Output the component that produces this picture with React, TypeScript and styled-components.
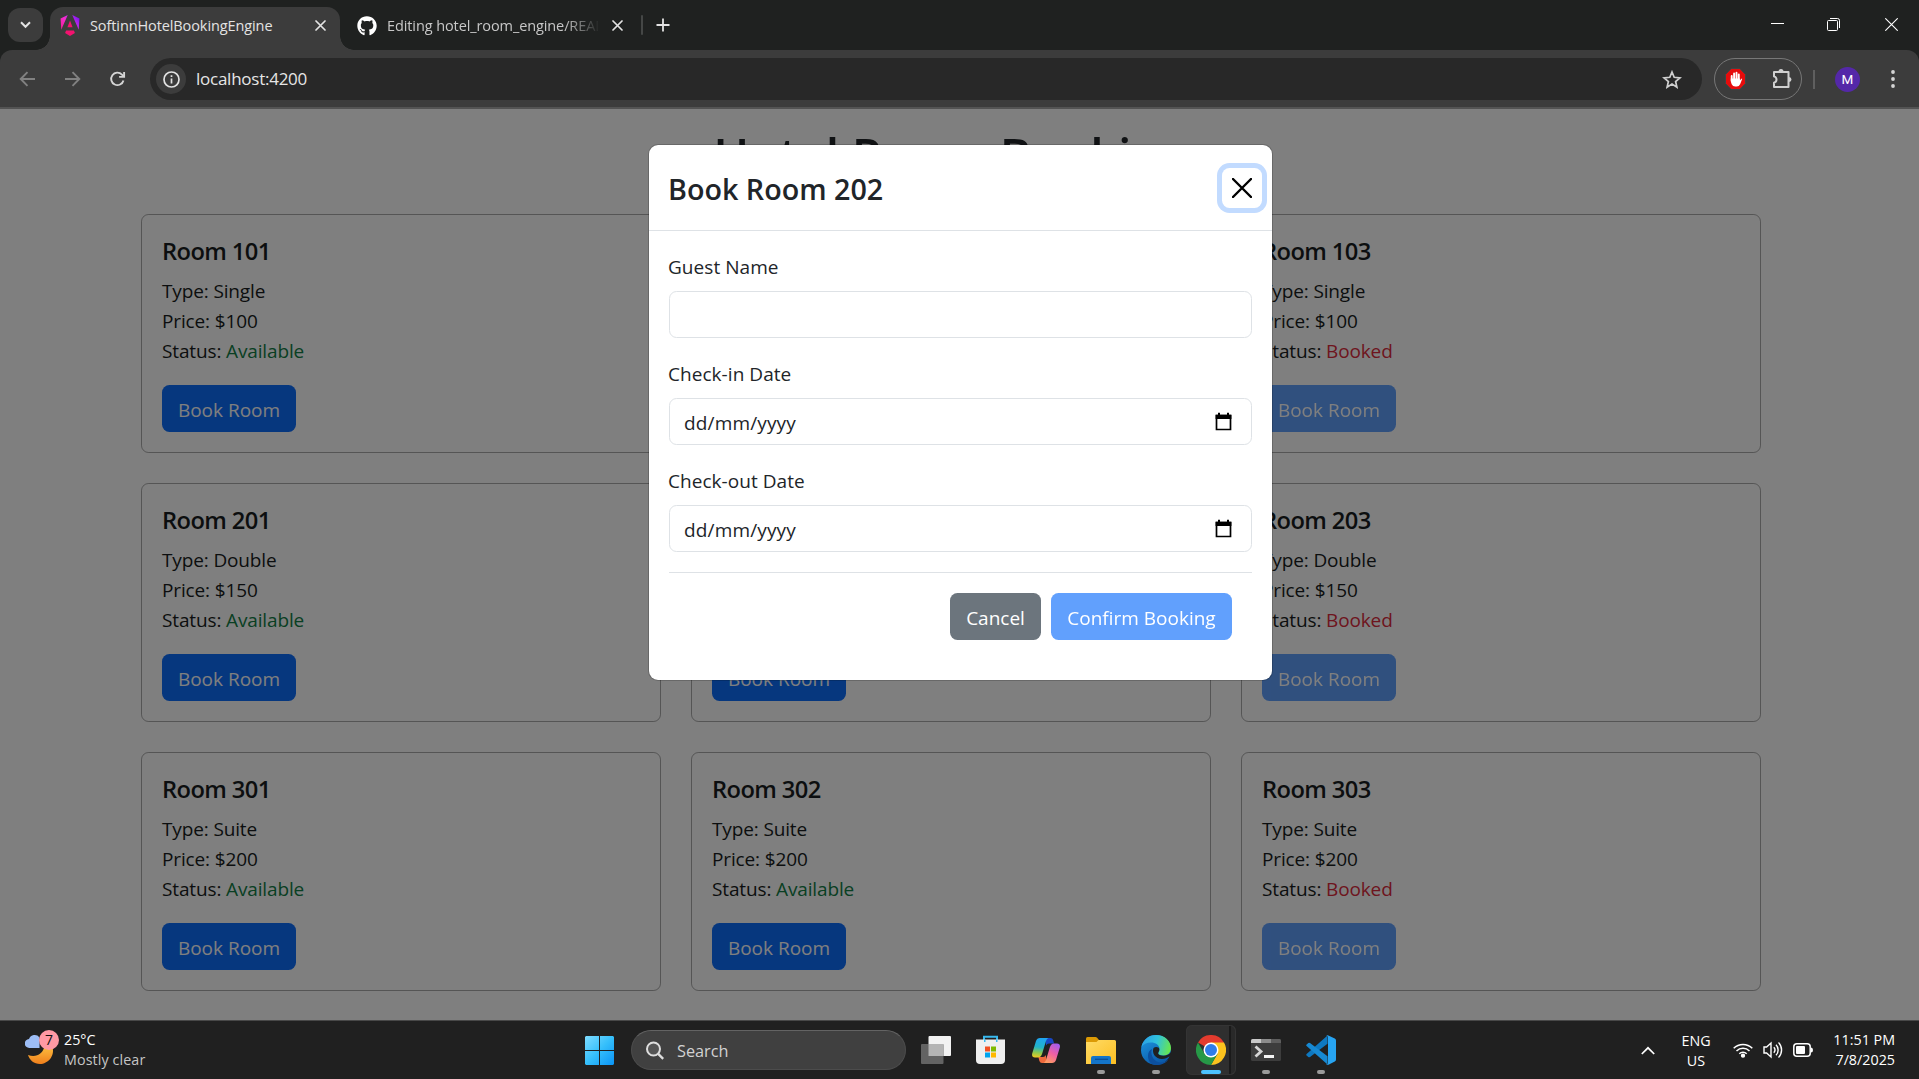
import React from "react";
import styled, { createGlobalStyle } from "styled-components";
import { FaGithub } from "react-icons/fa";

const Global = createGlobalStyle`
  *, *::before, *::after { box-sizing: border-box; }
  html, body { margin: 0; padding: 0; overflow: hidden; background: #202020; }
  body { font-family: "Open Sans", "Noto Sans", sans-serif; }
  button { font: inherit; border: 0; background: none; padding: 0; margin: 0; color: inherit; }
  svg { display: block; flex: none; }
`;

const Screen = styled.div`
  display: flex;
  flex-direction: column;
  width: 1919px;
  height: 1079px;
  overflow: hidden;
`;

/* ---------- Browser frame ---------- */

const TabStrip = styled.div`
  display: flex;
  align-items: flex-start;
  height: 50px;
  padding: 7px 21px 0 8px;
  background: #1f2120;
  color: #e3e3e3;
`;

const TabSearch = styled.button`
  display: grid;
  place-items: center;
  width: 35px;
  height: 34px;
  margin: 1px 7px 0 0;
  border-radius: 12px;
  background: #3c3c3c;
`;

const Tab = styled.div<{ $active?: boolean }>`
  position: relative;
  display: flex;
  align-items: center;
  width: ${(p) => (p.$active ? 290 : 301)}px;
  height: 43px;
  padding: ${(p) => (p.$active ? "0 14px 6px 10px" : "0 18px 6px 17px")};
  border-radius: 13px 13px 0 0;
  background: ${(p) => (p.$active ? "#3c3c3c" : "transparent")};

  &::before,
  &::after {
    content: "";
    display: ${(p) => (p.$active ? "block" : "none")};
    position: absolute;
    bottom: 0;
    width: 14px;
    height: 14px;
  }
  &::before {
    left: -14px;
    background: radial-gradient(circle at 0 0, transparent 13.5px, #3c3c3c 14px);
  }
  &::after {
    right: -14px;
    background: radial-gradient(circle at 100% 0, transparent 13.5px, #3c3c3c 14px);
  }
`;

const TabTitle = styled.span<{ $fade?: boolean }>`
  flex: 1;
  margin-left: 10px;
  overflow: hidden;
  white-space: nowrap;
  font-size: 14.5px;
  line-height: 24px;
  letter-spacing: -0.1px;
  color: ${(p) => (p.$fade ? "#c7c7c7" : "#e3e3e3")};
  mask-image: ${(p) => (p.$fade ? "linear-gradient(90deg, #000 84%, transparent 101%)" : "none")};
  margin-right: ${(p) => (p.$fade ? 14 : 18)}px;
`;

const StripDivider = styled.span`
  width: 2px;
  height: 20px;
  margin: 8px 13px 0 0;
  border-radius: 1px;
  background: #454746;
`;

const NewTab = styled.button`
  margin-top: 11px;
`;

const WindowControls = styled.div`
  display: flex;
  align-items: center;
  gap: 44px;
  margin: 11px 0 0 auto;

  svg:nth-child(2) { margin: 0 1px 0 -1px; }
`;

const Toolbar = styled.div`
  display: flex;
  align-items: center;
  height: 59px;
  padding: 1px 20px 0 19px;
  background: #3c3c3c;
  border-radius: 12px 12px 0 0;
  border-bottom: 2px solid #535353;
`;

const ToolbarBack = styled.div`
  flex: none;
  background: #1f2120;
`;

const NavButtons = styled.div`
  display: flex;
  align-items: center;
  gap: 28px;
  width: 131px;
`;

const Omnibox = styled.div`
  display: flex;
  align-items: center;
  width: 1552px;
  height: 42px;
  padding: 0 20px 0 6px;
  border-radius: 21px;
  background: #282828;
`;

const SiteInfo = styled.span`
  display: grid;
  place-items: center;
  width: 30px;
  height: 30px;
  border-radius: 50%;
  background: #3c3c3c;
`;

const Address = styled.span`
  flex: 1;
  margin-left: 10px;
  font-size: 17px;
  line-height: 24px;
  letter-spacing: -0.25px;
  color: #e6e6e6;
`;

const Extensions = styled.div`
  display: flex;
  align-items: center;
  justify-content: space-between;
  width: 88px;
  height: 42px;
  margin-left: 12px;
  padding: 0 8px 0 10px;
  border: 1px solid #777;
  border-radius: 21px;
`;

const ToolbarDivider = styled.span`
  width: 2px;
  height: 19px;
  margin: 0 20px 0 11px;
  background: #5f5f5f;
`;

const Avatar = styled.span`
  display: grid;
  place-items: center;
  width: 25px;
  height: 25px;
  margin-right: auto;
  border-radius: 50%;
  background: #5428a8;
  color: #fff;
  font: 400 13.5px/25px Roboto, sans-serif;
`;

/* ---------- Page ---------- */

const Viewport = styled.main`
  position: relative;
  height: 911px;
  flex: none;
  overflow: hidden;
  background: #fff;
  color: #212529;
  font-size: 19px;
  line-height: 30px;
`;

const Container = styled.div`
  width: 1620px;
  margin-left: 141px;
  padding-top: 16px;
`;

const PageTitle = styled.h1`
  margin: 0 0 29px;
  text-align: center;
  font-size: 48.2px;
  font-weight: 600;
  line-height: 60px;
  white-space: nowrap;
`;

const RoomGrid = styled.div`
  display: grid;
  grid-template-columns: repeat(3, 1fr);
  gap: 30px;
`;

const Card = styled.article`
  height: 239px;
  padding: 21px 20px 20px;
  border: 1px solid rgba(0, 0, 0, 0.33);
  border-radius: 7.5px;
  color: #181c20;
`;

const CardTitle = styled.h5`
  margin: 0 0 10px;
  font-size: 23.7px;
  font-weight: 600;
  line-height: 30px;
  letter-spacing: -0.6px;
`;

const Detail = styled.div`
  height: 30px;
  letter-spacing: -0.14px;
`;

const Status = styled.span<{ $booked: boolean }>`
  color: ${(p) => (p.$booked ? "#dc2b3d" : "#128046")};
`;

const Button = styled.button<{ $tone?: "primary" | "secondary"; $width: number }>`
  width: ${(p) => p.$width}px;
  height: 47px;
  padding-top: 2px;
  border-radius: 7.5px;
  background: ${(p) => (p.$tone === "secondary" ? "#6c757d" : "#0d6efd")};
  color: #fff;
  font-size: 19px;
  line-height: 30px;
  &:disabled { opacity: 0.65; }
`;

const BookButton = styled(Button)`
  margin-top: 19px;
`;

/* ---------- Modal ---------- */

const Backdrop = styled.div`
  position: absolute;
  inset: 0;
  display: flex;
  justify-content: center;
  align-items: flex-start;
  padding-top: 35px;
  background: rgba(0, 0, 0, 0.5);
`;

const Dialog = styled.section`
  width: 625px;
  margin-left: 2px;
  border: 1px solid rgba(0, 0, 0, 0.175);
  border-radius: 10px;
  background: #fff;
  background-clip: padding-box;
`;

const DialogHeader = styled.header`
  display: flex;
  align-items: center;
  justify-content: space-between;
  height: 86px;
  padding: 0 10px 0 19px;
  border-bottom: 1px solid #dee2e6;
`;

const DialogTitle = styled.h4`
  margin: 1px 0 0;
  font-size: 28.7px;
  font-weight: 600;
  line-height: 45px;
`;

const CloseButton = styled.button`
  display: grid;
  place-items: center;
  width: 40px;
  height: 40px;
  border-radius: 7.5px;
  box-shadow: 0 0 0 5px #c2dbff;
`;

const DialogBody = styled.div`
  padding: 20px;
`;

const Field = styled.label`
  display: block;
  margin-bottom: 20px;
`;

const FieldLabel = styled.span`
  display: block;
  height: 30px;
  margin-bottom: 10px;
  line-height: 32px;
  text-indent: -1px;
  letter-spacing: 0.05px;
`;

const Control = styled.span`
  display: flex;
  align-items: center;
  justify-content: space-between;
  height: 47px;
  padding: 2px 19px 0 14px;
  border: 1px solid #dee2e6;
  border-radius: 7.5px;
  letter-spacing: 0.15px;

  svg { margin-bottom: 2px; }
`;

const DialogFooter = styled.footer`
  display: flex;
  justify-content: flex-end;
  gap: 10px;
  padding: 20px;
  border-top: 1px solid #dee2e6;
`;

/* ---------- Taskbar ---------- */

const Taskbar = styled.footer`
  display: flex;
  align-items: center;
  height: 59px;
  flex: none;
  padding: 0 24px 0 25px;
  border-top: 1px solid #484848;
  background: #202020;
  color: #fff;
  font-size: 14.3px;
  line-height: 20px;
`;

const Weather = styled.div`
  display: flex;
  align-items: center;
  width: 560px;
`;

const WeatherIcon = styled.div`
  position: relative;
  width: 30px;
  height: 32px;
  margin: -8px 9px 0 0;
`;

const Badge = styled.span`
  position: absolute;
  left: 14px;
  top: 0;
  width: 20px;
  height: 20px;
  border-radius: 50%;
  background: #ff99a4;
  color: #111;
  text-align: center;
  font-size: 14px;
  line-height: 20px;
`;

const Muted = styled.div`
  color: #c5c5c5;
  letter-spacing: 0.1px;
`;

const SearchBox = styled.div`
  display: flex;
  align-items: center;
  width: 275px;
  height: 40px;
  margin: 0 2px 0 17px;
  padding-left: 14px;
  gap: 13px;
  border: 1px solid #4c4c4c;
  border-top-color: #636363;
  border-radius: 20px;
  background: #404040;
  color: #d2d2d2;
  font-size: 16.3px;
`;

const SearchHint = styled.span`
  padding-top: 1px;
`;

const AppSlot = styled.div<{ $active?: boolean }>`
  position: relative;
  display: grid;
  place-items: center;
  width: ${(p) => (p.$active ? 50 : 55)}px;
  height: 50px;
  margin: ${(p) => (p.$active ? "0 2.5px" : "0")};
  border-radius: 6px;
  background: ${(p) => (p.$active ? "linear-gradient(90deg, #2f2f2f 43px, #1a1a1a 43px, #1a1a1a 45px, #292929 45px)" : "none")};
  box-shadow: ${(p) => (p.$active ? "inset 0 0 0 1px #343434" : "none")};
`;

const RunMark = styled.span<{ $active?: boolean }>`
  position: absolute;
  left: 50%;
  bottom: 1px;
  width: ${(p) => (p.$active ? 20 : 8)}px;
  height: 4px;
  border-radius: 2px;
  transform: translateX(-50%);
  background: ${(p) => (p.$active ? "#4cc2ff" : "#9a9a9a")};
`;

const Tray = styled.div`
  display: flex;
  align-items: center;
  margin-left: auto;
`;

const Language = styled.div`
  width: 40px;
  margin: 0 17px 0 21px;
  padding-top: 1px;
  text-align: center;
`;

const TrayIcons = styled.div`
  display: flex;
  align-items: center;
  gap: 10px;
`;

const Clock = styled.div`
  width: 82px;
  text-align: right;
  white-space: nowrap;
`;

/* ---------- Icons ---------- */

const Cross = ({ size, stroke, color = "#e3e3e3" }: { size: number; stroke: number; color?: string }) => (
  <svg width={size} height={size} viewBox={`0 0 ${size} ${size}`} stroke={color} strokeWidth={stroke} strokeLinecap="round">
    <path d={`M1 1L${size - 1} ${size - 1}M${size - 1} 1L1 ${size - 1}`} />
  </svg>
);

const AngularIcon = () => (
  <svg width="20" height="21" viewBox="0 0 24 24" preserveAspectRatio="none">
    <defs>
      <linearGradient id="ngA" x1="0" y1="0.8" x2="1" y2="0.2">
        <stop offset="0" stopColor="#f0209a" />
        <stop offset=".4" stopColor="#f62bd0" />
        <stop offset=".65" stopColor="#c42be8" />
        <stop offset="1" stopColor="#7a12f5" />
      </linearGradient>
    </defs>
    <path fill="url(#ngA)" d="M14.7 0l7.8 16.9.8-12.9zM9.3 0L.7 4l.8 12.9z" />
    <path fill="#f4126f" d="M16.7 17.7H7.3l-1.2 2.9L12 24l5.9-3.4zM8.9 13.9h6.2L12 6.4z" />
  </svg>
);

const CalendarIcon = () => (
  <svg width="17" height="19" viewBox="0 0 17 19">
    <path d="M1.500 3.500h14v14h-14z" fill="none" stroke="#000" strokeWidth="1.700" />
    <path d="M.6 2.800h15.800V7H.6zM3 .8h2v3H3zM12 .8h2v3h-2z" fill="#000" />
  </svg>
);

const WindowsLogo = () => (
  <svg width="29" height="29" viewBox="0 0 29 29">
    <defs>
      <linearGradient id="win" x1="0" y1="0" x2="1" y2="1">
        <stop offset="0" stopColor="#7fdcff" />
        <stop offset=".5" stopColor="#35bffb" />
        <stop offset="1" stopColor="#0a93f5" />
      </linearGradient>
    </defs>
    <path fill="url(#win)" d="M1 0h13v14H0V1zM15 0h13l1 1v13H15zM0 15h14v14H1l-1-1zM15 15h14v13l-1 1H15z" />
  </svg>
);

const TaskViewIcon = () => (
  <svg width="30" height="28" viewBox="0 0 30 28">
    <rect x="7.500" y="0" width="22.500" height="20" rx="1" fill="#f2f2f2" />
    <rect x="0" y="8" width="22.500" height="20" rx="1" fill="#636363" />
    <path d="M7.500 8h15v12h-15z" fill="#b4b4b4" />
  </svg>
);

const StoreIcon = () => (
  <svg width="29" height="30" viewBox="0 0 29 30">
    <path d="M8 6V1.700h13V6" fill="none" stroke="#39b9ee" strokeWidth="2" />
    <path d="M0 4.500h29V25q0 4-4 4H4q-4 0-4-4z" fill="#efefef" />
    <path d="M8 4.500h1.500V7H8zM20 4.500h1.500V7H20z" fill="#39b9ee" />
    <path d="M9 11.500h5v5H9z" fill="#f25022" />
    <path d="M15 11.500h5v5h-5z" fill="#7fba00" />
    <path d="M9 17.500h5v5H9z" fill="#00a4ef" />
    <path d="M15 17.500h5v5h-5z" fill="#ffb900" />
  </svg>
);

const CopilotIcon = () => (
  <svg width="28" height="25" viewBox="0 0 28 25">
    <defs>
      <linearGradient id="cpA" x1=".3" y1="0" x2=".2" y2="1">
        <stop offset="0" stopColor="#1fa5f0" />
        <stop offset=".45" stopColor="#22b3c8" />
        <stop offset=".75" stopColor="#8fc94d" />
        <stop offset="1" stopColor="#f2ca20" />
      </linearGradient>
      <linearGradient id="cpB" x1=".8" y1="0" x2=".3" y2="1">
        <stop offset="0" stopColor="#a35cf0" />
        <stop offset=".5" stopColor="#ee5fa5" />
        <stop offset="1" stopColor="#ff9c61" />
      </linearGradient>
    </defs>
    <path d="M13 0h5.500q2 0 2.600 2l1 3.500H17q-2 0-2.800 2z" fill="#1846c4" />
    <path d="M15 25H10q-2 0-2.600-2l-1-4H11q2 0 2.800-2z" fill="#ef6a3d" />
    <path d="M8 0h8.500q-1.700.6-2.500 3l-3.800 12.500Q9 19.500 6 19.500H3Q-.6 19.500.2 15.500L4 3Q5 0 8 0z" fill="url(#cpA)" />
    <path d="M20 25h-8.500q1.700-.6 2.500-3l3.800-12.500Q19 5.500 22 5.500h3q3.600 0 2.800 4L24 22q-1 3-4 3z" fill="url(#cpB)" />
  </svg>
);

const FolderIcon = () => (
  <svg width="30" height="27" viewBox="0 0 30 27">
    <defs>
      <linearGradient id="fold" x1="0" y1="0" x2="1" y2="1">
        <stop offset="0" stopColor="#ffdb66" />
        <stop offset="1" stopColor="#fcbf22" />
      </linearGradient>
    </defs>
    <path d="M0 1.500Q0 0 1.500 0h8q1 0 1.600.7L13 3v5H0z" fill="#dc9a05" />
    <path d="M0 5h10.500l2-2H28.500Q30 3 30 4.500V27H0z" fill="url(#fold)" />
    <path d="M5 27v-6q0-2 2-2h16q2 0 2 2v6z" fill="#1475c9" />
    <path d="M9 22.300h13" stroke="#0b4f97" strokeWidth="1.300" />
  </svg>
);

const EdgeIcon = () => (
  <svg width="30" height="30" viewBox="0 0 30 30">
    <defs>
      <linearGradient id="edT" x1="0" y1=".3" x2="1" y2=".5">
        <stop offset="0" stopColor="#2b9fe6" />
        <stop offset=".5" stopColor="#30c2dd" />
        <stop offset="1" stopColor="#67e64f" />
      </linearGradient>
      <linearGradient id="edL" x1="0" y1="0" x2=".6" y2="1">
        <stop offset="0" stopColor="#1f9ae3" />
        <stop offset="1" stopColor="#0a58a8" />
      </linearGradient>
    </defs>
    <circle cx="15" cy="15" r="15" fill="url(#edL)" />
    <path d="M.4 12C2 4.500 8 0 15 0c9 0 15 6.300 15 13 0 5-3.600 7.500-7.700 7.500-3.300 0-5-1-5-2.200 0-1 1.300-1.500 1.300-4C18.600 10 14.500 7.500 10 7.500 5.500 7.500 2 9.500.4 12z" fill="url(#edT)" />
    <path d="M11 14c-2.500 7 3 13.500 9 13.500 3 0 5.500-1 7.500-3-2.300 3.500-7 5.500-12 5.500C9 30 7 25 7 21c0-3.500 1.700-6 4-7z" fill="#0c4f9e" />
    <path d="M12.500 13c-2 5 2 11 8.500 11 3 0 5.300-1.200 6.800-2.300.8-.5 1.200 0 .8.700-.3.700-.6 1.200-1.100 1.900L30 24v-7c-1.500 2.500-4.500 3.700-7.700 3.700-3.300 0-5.200-1-5.200-2.500 0-1 1.200-1.500 1.200-4 0-2.200-3.800-3-5.800-1.200z" fill="#202020" />
  </svg>
);

const ChromeIcon = () => (
  <svg width="30" height="30" viewBox="0 0 30 30">
    <path d="M15 15L2 7.500A15 15 0 0 1 28 7.500z" fill="#e33b2e" />
    <path d="M15 7.500H28A15 15 0 0 1 15 30L21.500 18.700z" fill="#fcc31e" />
    <path d="M8.500 18.700L2 7.500A15 15 0 0 0 15 30l6.500-11.300z" fill="#269947" />
    <circle cx="15" cy="15" r="7.500" fill="#fff" />
    <circle cx="15" cy="15" r="6" fill="#2f7de9" />
  </svg>
);

const TerminalIcon = () => (
  <svg width="30" height="22" viewBox="0 0 30 22">
    <rect width="30" height="22" rx="1.500" fill="#3d3d3d" />
    <path d="M1.500 0H10v4H0V1.500Q0 0 1.500 0z" fill="#c9c9c9" />
    <path d="M10 0h10v4H10z" fill="#8c8c8c" />
    <path d="M20 0h8.500Q30 0 30 1.500V4H20z" fill="#5e5e5e" />
    <path d="M4.500 7.500l5.500 5-5.500 5" fill="none" stroke="#d6d6d6" strokeWidth="2.800" />
    <path d="M13 16h10v3H13z" fill="#f5f5f5" />
  </svg>
);

const VsCodeIcon = () => (
  <svg width="30" height="30" viewBox="0 0 30 30">
    <path d="M2.300 22L.6 20.500q-.8-.8 0-1.600L21.500.5v8.300L4 22q-.9.700-1.700 0z" fill="#0e78c0" />
    <path d="M2.300 8L.6 9.500q-.8.8 0 1.600l20.900 18.400v-8.300L4 8q-.9-.7-1.700 0z" fill="#1789d3" />
    <path d="M21.500 29.800q-.8 0-1.500-.6c1 .5 2-.2 2-1.300V2.100c0-1.100-1-1.800-2-1.300q.7-.8 1.800-.6L28.800 3.500q1.200.6 1.200 2v19q0 1.400-1.200 2l-6.300 3.200z" fill="#27a4f2" />
  </svg>
);

const BlockerIcon = () => (
  <svg width="21" height="22" viewBox="0 0 21 22">
    <path d="M6.200.5h8.600l5.700 6v9l-5.700 6H6.200l-5.700-6v-9z" fill="#e60c0c" stroke="#265050" strokeWidth=".8" />
    <path d="M6.700 8v5M9.100 5.500V12M11.500 4.800V12M13.800 6.500V13" stroke="#fff" strokeWidth="1.900" strokeLinecap="round" />
    <path d="M5.800 10.500h9v2l1.600-1.800q1-.7.700.5l-2 5q-1 2.300-3.300 2.300h-1.600q-2.500 0-3.500-2.300-.9-2-.9-3.700z" fill="#fff" />
  </svg>
);

const rooms = [
  { no: 101, type: "Single", price: 100, booked: false },
  { no: 102, type: "Single", price: 100, booked: false },
  { no: 103, type: "Single", price: 100, booked: true },
  { no: 201, type: "Double", price: 150, booked: false },
  { no: 202, type: "Double", price: 150, booked: false },
  { no: 203, type: "Double", price: 150, booked: true },
  { no: 301, type: "Suite", price: 200, booked: false },
  { no: 302, type: "Suite", price: 200, booked: false },
  { no: 303, type: "Suite", price: 200, booked: true },
];

function BrowserFrame() {
  return (
    <>
      <TabStrip>
        <TabSearch>
          <svg width="11" height="8" viewBox="0 0 11 8" fill="none" stroke="#e3e3e3" strokeWidth="2">
            <path d="M1 1.300l4.500 4.500L10 1.300" />
          </svg>
        </TabSearch>
        <Tab $active>
          <AngularIcon />
          <TabTitle>SoftinnHotelBookingEngine</TabTitle>
          <Cross size={11} stroke={1.7} />
        </Tab>
        <Tab>
          <FaGithub size={20} color="#fff" />
          <TabTitle $fade>Editing hotel_room_engine/README</TabTitle>
          <Cross size={11} stroke={1.7} />
        </Tab>
        <StripDivider />
        <NewTab>
          <svg width="14" height="14" viewBox="0 0 14 14" stroke="#e3e3e3" strokeWidth="1.800">
            <path d="M7 .5v13M.5 7h13" />
          </svg>
        </NewTab>
        <WindowControls>
          <svg width="13" height="13" viewBox="0 0 13 13" stroke="#fff">
            <path d="M0 5.500h13" />
          </svg>
          <svg width="13" height="13" viewBox="0 0 13 13" fill="none" stroke="#fff">
            <rect x=".5" y="2.500" width="10" height="10" rx="1" />
            <path d="M3 .5h7.500q2 0 2 2V10" />
          </svg>
          <svg width="13" height="13" viewBox="0 0 13 13" stroke="#fff" strokeWidth="1.100">
            <path d="M.3.3l12.400 12.400M12.700.3L.3 12.700" />
          </svg>
        </WindowControls>
      </TabStrip>
      <ToolbarBack>
        <Toolbar>
          <NavButtons>
            <svg width="17" height="16" viewBox="0 0 17 16" fill="none" stroke="#818181" strokeWidth="1.900">
              <path d="M16 8H2M8.500 1.200L1.700 8l6.800 6.800" />
            </svg>
            <svg width="17" height="16" viewBox="0 0 17 16" fill="none" stroke="#818181" strokeWidth="1.900">
              <path d="M1 8h14M8.500 1.200L15.300 8l-6.800 6.800" />
            </svg>
            <svg width="17" height="18" viewBox="0 0 18 18" fill="none" stroke="#d5d5d5" strokeWidth="2">
              <path d="M15.300 10.500A6.600 6.600 0 1 1 13.700 4.300L15.500 6.200" />
              <path d="M16 1.500v5.300h-5.300" />
            </svg>
          </NavButtons>
          <Omnibox>
            <SiteInfo>
              <svg width="17" height="17" viewBox="0 0 17 17" fill="none" stroke="#e3e3e3" strokeWidth="1.700">
                <circle cx="8.500" cy="8.500" r="7.500" />
                <path d="M8.500 7.500v5M8.500 4.300V6" />
              </svg>
            </SiteInfo>
            <Address>localhost:4200</Address>
            <svg width="20" height="19" viewBox="0 0 20 19" fill="none" stroke="#d0d0d0" strokeWidth="1.700">
              <path d="M10 2l2.200 5.300 5.700.5-4.300 3.700 1.300 5.600L10 14.100l-4.900 3 1.300-5.600L2.100 7.800l5.700-.5z" />
            </svg>
          </Omnibox>
          <Extensions>
            <BlockerIcon />
            <svg width="22" height="22" viewBox="0 0 22 22">
              <path d="M3 4h14.500v15H3v-4.200a3.300 3.300 0 0 0 0-6.400z" fill="none" stroke="#d0d0d0" strokeWidth="2" strokeLinejoin="round" />
              <path d="M7.500 3.500a2.500 2.500 0 0 1 5 0zM18 9a2.500 2.500 0 0 1 0 5z" fill="#d0d0d0" />
            </svg>
          </Extensions>
          <ToolbarDivider />
          <Avatar>M</Avatar>
          <svg width="12" height="18" viewBox="0 0 12 18" fill="#d5d5d5">
            <circle cx="6" cy="2" r="1.900" />
            <circle cx="6" cy="9" r="1.900" />
            <circle cx="6" cy="16" r="1.900" />
          </svg>
        </Toolbar>
      </ToolbarBack>
    </>
  );
}

function BookingDialog() {
  return (
    <Dialog role="dialog">
      <DialogHeader>
        <DialogTitle>Book Room 202</DialogTitle>
        <CloseButton aria-label="Close">
          <Cross size={20} stroke={2.4} color="#000" />
        </CloseButton>
      </DialogHeader>
      <DialogBody>
        <Field>
          <FieldLabel>Guest Name</FieldLabel>
          <Control />
        </Field>
        {["Check-in Date", "Check-out Date"].map((label) => (
          <Field key={label}>
            <FieldLabel>{label}</FieldLabel>
            <Control>
              dd/mm/yyyy
              <CalendarIcon />
            </Control>
          </Field>
        ))}
        <DialogFooter>
          <Button $tone="secondary" $width={91}>Cancel</Button>
          <Button $width={181} disabled>Confirm Booking</Button>
        </DialogFooter>
      </DialogBody>
    </Dialog>
  );
}

function SystemTaskbar() {
  return (
    <Taskbar>
      <Weather>
        <WeatherIcon>
          <svg width="30" height="35" viewBox="0 0 30 35">
            <defs>
              <linearGradient id="moon" x1="0" y1="0" x2="0" y2="1">
                <stop offset="0" stopColor="#fcc040" />
                <stop offset="1" stopColor="#f07f1c" />
              </linearGradient>
            </defs>
            <path d="M27.500 17C30 26 23 34 15 34 9 34 4.500 30 3 25c8 3 15-1 16.500-9z" fill="url(#moon)" />
            <path d="M4.500 18a4.500 4.500 0 0 1-.5-9 6 6 0 0 1 10.500-1.500V18z" fill="#9dbdf5" />
          </svg>
          <Badge>7</Badge>
        </WeatherIcon>
        <div>
          25°C
          <Muted>Mostly clear</Muted>
        </div>
      </Weather>
      <WindowsLogo />
      <SearchBox>
        <svg width="18" height="19" viewBox="0 0 18 19" fill="none" stroke="#dedede" strokeWidth="2">
          <circle cx="7.500" cy="8" r="6.500" fill="#555" />
          <path d="M12.200 12.800l5 5" strokeWidth="2.400" />
        </svg>
        <SearchHint>Search</SearchHint>
      </SearchBox>
      <AppSlot><TaskViewIcon /></AppSlot>
      <AppSlot><StoreIcon /></AppSlot>
      <AppSlot><CopilotIcon /></AppSlot>
      <AppSlot><FolderIcon /><RunMark /></AppSlot>
      <AppSlot><EdgeIcon /><RunMark /></AppSlot>
      <AppSlot $active><ChromeIcon /><RunMark $active /></AppSlot>
      <AppSlot><TerminalIcon /><RunMark /></AppSlot>
      <AppSlot><VsCodeIcon /><RunMark /></AppSlot>
      <Tray>
        <svg width="14" height="9" viewBox="0 0 14 9" fill="none" stroke="#fff" strokeWidth="1.700">
          <path d="M.8 8L7 1.800 13.200 8" />
        </svg>
        <Language>ENG<br />US</Language>
        <TrayIcons>
          <svg width="20" height="16" viewBox="0 0 20 16" fill="none" stroke="#fff" strokeWidth="1.500">
            <path d="M.7 6.300a13.200 13.200 0 0 1 18.600 0M3.500 9a9.200 9.200 0 0 1 13 0M6.300 11.700a5.300 5.300 0 0 1 7.400 0" />
            <circle cx="10" cy="13.700" r="1.400" fill="#fff" />
          </svg>
          <svg width="20" height="18" viewBox="0 0 20 18" fill="none" stroke="#fff" strokeWidth="1.400">
            <path d="M1 6h2.600L8 2v14l-4.400-4H1z" />
            <path d="M10.800 6.300a4 4 0 0 1 0 5.400M13 3.800a7.400 7.400 0 0 1 0 10.400M15.500 1.500a10.700 10.700 0 0 1 0 15" />
          </svg>
          <svg width="20" height="14" viewBox="0 0 20 14">
            <rect x=".8" y=".8" width="16.400" height="12.400" rx="3" fill="none" stroke="#fff" strokeWidth="1.500" />
            <rect x="3" y="3" width="9" height="8" rx="1" fill="#fff" />
            <path d="M18 4.500q2 0 2 2.500t-2 2.500z" fill="#fff" />
          </svg>
        </TrayIcons>
        <Clock>11:51 PM<br />7/8/2025</Clock>
      </Tray>
    </Taskbar>
  );
}

export default function App() {
  return (
    <Screen>
      <Global />
      <BrowserFrame />
      <Viewport>
        <Container>
          <PageTitle>Hotel Room Booking</PageTitle>
          <RoomGrid>
            {rooms.map((r) => (
              <Card key={r.no}>
                <CardTitle>Room {r.no}</CardTitle>
                <Detail>Type: {r.type}</Detail>
                <Detail>Price: ${r.price}</Detail>
                <Detail>
                  Status: <Status $booked={r.booked}>{r.booked ? "Booked" : "Available"}</Status>
                </Detail>
                <BookButton $width={134} disabled={r.booked}>Book Room</BookButton>
              </Card>
            ))}
          </RoomGrid>
        </Container>
        <Backdrop>
          <BookingDialog />
        </Backdrop>
      </Viewport>
      <SystemTaskbar />
    </Screen>
  );
}
